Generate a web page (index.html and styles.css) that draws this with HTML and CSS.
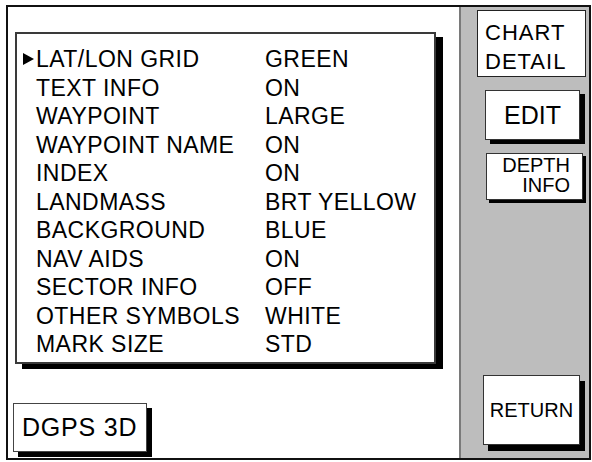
FILE: index.html
```html
<!DOCTYPE html>
<html lang="en">
<head>
    <meta charset="UTF-8">
    <title>Chart Detail</title>
    <link rel="stylesheet" href="styles.css">
</head>
<body>
    <div class="screen">
        <div class="main">
            <div class="menu">
                <div class="row"><span class="mark on"></span><span>LAT/LON GRID</span><span>GREEN</span></div>
                <div class="row"><span class="mark"></span><span>TEXT INFO</span><span>ON</span></div>
                <div class="row"><span class="mark"></span><span>WAYPOINT</span><span>LARGE</span></div>
                <div class="row"><span class="mark"></span><span>WAYPOINT NAME</span><span>ON</span></div>
                <div class="row"><span class="mark"></span><span>INDEX</span><span>ON</span></div>
                <div class="row"><span class="mark"></span><span>LANDMASS</span><span>BRT YELLOW</span></div>
                <div class="row"><span class="mark"></span><span>BACKGROUND</span><span>BLUE</span></div>
                <div class="row"><span class="mark"></span><span>NAV AIDS</span><span>ON</span></div>
                <div class="row"><span class="mark"></span><span>SECTOR INFO</span><span>OFF</span></div>
                <div class="row"><span class="mark"></span><span>OTHER SYMBOLS</span><span>WHITE</span></div>
                <div class="row"><span class="mark"></span><span>MARK SIZE</span><span>STD</span></div>
            </div>
            <div class="status">DGPS 3D</div>
        </div>
        <div class="side">
            <div class="title">CHART<br>DETAIL</div>
            <div class="key edit">EDIT</div>
            <div class="key depth">DEPTH<br>INFO</div>
            <div class="key back">RETURN</div>
        </div>
    </div>
</body>
</html>
```

FILE: styles.css
```css
body { margin: 0; background: #fff; font-family: "Liberation Sans", Arial, sans-serif; color: #000; }
.screen { display: flex; box-sizing: border-box; width: 585px; height: 455px; margin: 5px 0 0 6px; border: 2px solid #111; }
.main { display: flex; flex-direction: column; width: 451px; }
.menu { box-sizing: border-box; width: 421px; height: 332px; margin: 25px 0 0 7px; padding: 11px 0 0 6px; border: 2px solid #3a3a3a; box-shadow: 7px 5px 0 #000; background: #fff; font-size: 23px; letter-spacing: 0.45px; line-height: 28.5px; }
.row { display: grid; grid-template-columns: 13px 229px auto; align-items: center; white-space: nowrap; }
.mark { width: 0; height: 0; }
.mark.on { border-left: 11px solid #000; border-top: 6.5px solid transparent; border-bottom: 6.5px solid transparent; }
.status { box-sizing: border-box; width: 134px; height: 49px; margin: 39px 0 0 5px; padding-left: 8px; border: 1px solid #444; box-shadow: 5px 5px 0 #000; background: #fff; font-size: 25px; letter-spacing: 0.8px; line-height: 47px; }
.side { display: flex; flex-direction: column; flex: 1; background: #bdbdbd; border-left: 2px solid #7a7a7a; }
.title { box-sizing: border-box; width: 109px; height: 67px; margin: 3px 0 0 16px; padding: 7px 0 0 7px; border: 1px solid #222; background: #fff; font-size: 22px; letter-spacing: 1px; line-height: 29px; }
.key { box-sizing: border-box; border: 1px solid #333; background: #fff; }
.edit { width: 95px; height: 50px; margin: 13px 0 0 24px; box-shadow: 5px 4px 0 #000; font-size: 25px; line-height: 48px; text-align: center; }
.depth { width: 97px; height: 47px; margin: 13px 0 0 25px; padding: 1px 12px 0 0; box-shadow: 3px 3px 0 #000; font-size: 20px; line-height: 20px; text-align: right; }
.back { width: 97px; height: 70px; margin: auto 0 13px 22px; box-shadow: 5px 6px 0 #000; font-size: 20px; line-height: 68px; text-align: center; }
```
